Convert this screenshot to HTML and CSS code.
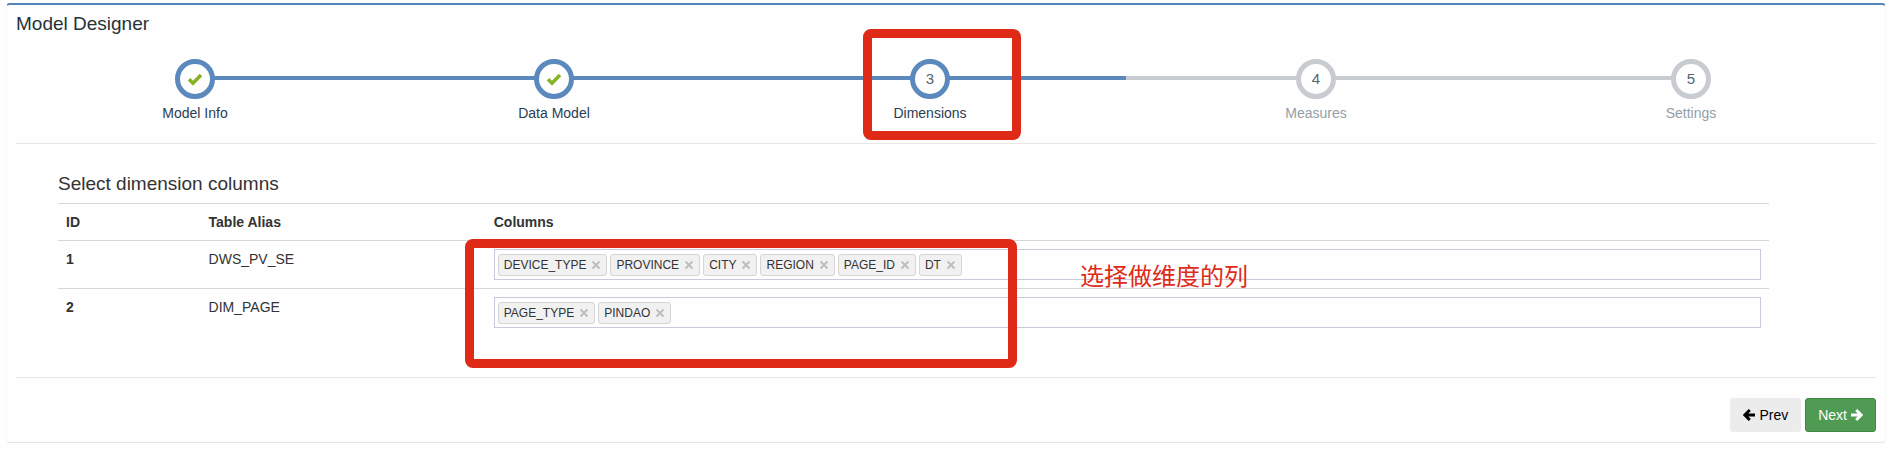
FILE: index.html
```html
<!DOCTYPE html>
<html lang="en">
<head>
<meta charset="utf-8">
<title>Model Designer</title>
<link rel="stylesheet" href="styles.css">
</head>
<body>
<main class="box">
  <h1 class="title">Model Designer</h1>
  <ol class="steps">
    <li class="step done"><span class="circle"><svg class="check" viewBox="0 0 16 14"><path d="M2 7.2 6 11.2 14 3" fill="none" stroke="#87b426" stroke-width="3.6"/></svg></span><span class="step-name">Model Info</span></li>
    <li class="step done"><span class="circle"><svg class="check" viewBox="0 0 16 14"><path d="M2 7.2 6 11.2 14 3" fill="none" stroke="#87b426" stroke-width="3.6"/></svg></span><span class="step-name">Data Model</span></li>
    <li class="step done"><span class="circle">3</span><span class="step-name">Dimensions</span><span class="mark mark-step"></span></li>
    <li class="step"><span class="circle">4</span><span class="step-name">Measures</span></li>
    <li class="step"><span class="circle">5</span><span class="step-name">Settings</span></li>
  </ol>
  <section class="content">
    <h2 class="title">Select dimension columns</h2>
    <div class="table-wrap">
      <table class="dimensions">
        <thead>
          <tr><th class="col-id">ID</th><th class="col-alias">Table Alias</th><th>Columns</th></tr>
        </thead>
        <tbody>
          <tr>
            <th scope="row">1</th>
            <td>DWS_PV_SE</td>
            <td>
              <div class="tags">
                <span class="tag">DEVICE_TYPE<button class="remove" aria-label="Remove DEVICE_TYPE"><svg viewBox="0 0 10 10"><path d="M1.5 1.5 8.5 8.5M8.5 1.5 1.5 8.5"/></svg></button></span>
                <span class="tag">PROVINCE<button class="remove" aria-label="Remove PROVINCE"><svg viewBox="0 0 10 10"><path d="M1.5 1.5 8.5 8.5M8.5 1.5 1.5 8.5"/></svg></button></span>
                <span class="tag">CITY<button class="remove" aria-label="Remove CITY"><svg viewBox="0 0 10 10"><path d="M1.5 1.5 8.5 8.5M8.5 1.5 1.5 8.5"/></svg></button></span>
                <span class="tag">REGION<button class="remove" aria-label="Remove REGION"><svg viewBox="0 0 10 10"><path d="M1.5 1.5 8.5 8.5M8.5 1.5 1.5 8.5"/></svg></button></span>
                <span class="tag">PAGE_ID<button class="remove" aria-label="Remove PAGE_ID"><svg viewBox="0 0 10 10"><path d="M1.5 1.5 8.5 8.5M8.5 1.5 1.5 8.5"/></svg></button></span>
                <span class="tag">DT<button class="remove" aria-label="Remove DT"><svg viewBox="0 0 10 10"><path d="M1.5 1.5 8.5 8.5M8.5 1.5 1.5 8.5"/></svg></button></span>
                <input class="tag-input" type="text" aria-label="DWS_PV_SE columns">
              </div>
            </td>
          </tr>
          <tr>
            <th scope="row">2</th>
            <td>DIM_PAGE</td>
            <td>
              <div class="tags">
                <span class="tag">PAGE_TYPE<button class="remove" aria-label="Remove PAGE_TYPE"><svg viewBox="0 0 10 10"><path d="M1.5 1.5 8.5 8.5M8.5 1.5 1.5 8.5"/></svg></button></span>
                <span class="tag">PINDAO<button class="remove" aria-label="Remove PINDAO"><svg viewBox="0 0 10 10"><path d="M1.5 1.5 8.5 8.5M8.5 1.5 1.5 8.5"/></svg></button></span>
                <input class="tag-input" type="text" aria-label="DIM_PAGE columns">
              </div>
            </td>
          </tr>
        </tbody>
      </table>
      <span class="mark mark-columns"></span>
      <span class="note" lang="zh">选择做维度的列</span>
    </div>
  </section>
  <footer class="actions">
    <button class="btn"><svg class="arrow" viewBox="0 0 12 12"><path d="M6.8 1 1.8 6 6.8 11M2 6H12"/></svg>Prev</button>
    <button class="btn next">Next<svg class="arrow" viewBox="0 0 12 12"><path d="M5.2 1 10.2 6 5.2 11M10 6H0"/></svg></button>
  </footer>
</main>
</body>
</html>
```
FILE: styles.css
```css
* { box-sizing: border-box; }
body {
  margin: 0;
  padding: 3px 8px 20px 6px;
  background: #fefefe;
  color: #333;
  font: 14px/20px "Liberation Sans", Arial, sans-serif;
}
button, input { font: inherit; }
.box {
  padding: 9px 9px 10px;
  border: 1px solid #f8f8f8;
  border-top: 2px solid #5484b8;
  border-bottom-color: #e4e4e4;
  border-radius: 4px;
}
.title { margin: 0; font-size: 19px; font-weight: 400; line-height: 20px; }
h1.title { color: #263238; }
.steps {
  display: grid;
  grid-template-columns: 358fr 360fr 392fr 380fr 370fr;
  margin: 25px 0 0;
  padding: 0 0 20px;
  list-style: none;
  border-bottom: 1px solid #e7e7e7;
}
.step {
  position: relative;
  display: flex;
  flex-direction: column;
  align-items: center;
  gap: 4px;
  color: #949ea7;
}
.step::before {
  content: "";
  position: absolute;
  top: 17px;
  left: 0;
  width: 100%;
  height: 4px;
  background: #c8cbd0;
}
.step:first-child::before { left: 50%; width: 50%; }
.step:last-child::before { width: 50%; }
.step.done::before { background: #5b89bd; }
.circle {
  position: relative;
  display: flex;
  align-items: center;
  justify-content: center;
  width: 40px;
  height: 40px;
  border: 5px solid #c8cbd0;
  border-radius: 50%;
  background: #fefefe;
  color: #546474;
  font-size: 15px;
}
.done .circle { border-color: #5b89bd; }
.done .step-name { color: #2b3d53; }
.check { width: 16px; height: 14px; }
.mark {
  position: absolute;
  border: 9px solid #df2a18;
  border-radius: 8px;
  pointer-events: none;
}
.mark-step { top: -30px; left: 33%; width: 158px; height: 111px; }
.content { padding: 30px 107px 41px 42px; border-bottom: 1px solid #e7e7e7; }
.table-wrap { position: relative; margin-top: 9px; }
.dimensions { width: 100%; table-layout: fixed; border-collapse: separate; border-spacing: 0; }
.col-id { width: 8.333%; }
.col-alias { width: 16.667%; }
.dimensions th, .dimensions td {
  padding: 8px;
  border-top: 1px solid #d5d6d8;
  text-align: left;
  vertical-align: top;
}
.tags {
  display: flex;
  gap: 3px;
  padding: 4px 3px 3px;
  border: 1px solid #cacada;
}
.tag {
  display: flex;
  align-items: center;
  gap: 5px;
  height: 22px;
  padding: 0 5px;
  border: 1px solid #d5d5d5;
  border-radius: 3px;
  background: #f1f1f1;
  font-size: 12px;
}
.remove { display: flex; padding: 0; border: 0; background: none; }
.remove svg { width: 10px; height: 10px; fill: none; stroke: #bfbfbf; stroke-width: 2; }
.tag-input { flex: 1; min-width: 0; height: 22px; padding: 0; border: 0; background: none; }
.mark-columns { top: 36px; left: 407px; width: 552px; height: 129px; }
.note {
  position: absolute;
  top: 57px;
  left: 1022px;
  color: #df2a18;
  font: 400 24px/30px "Noto Sans CJK SC", sans-serif;
}
.actions { display: flex; justify-content: flex-end; gap: 4px; padding-top: 20px; }
.btn {
  display: flex;
  align-items: center;
  gap: 4px;
  padding: 6px 12px;
  border: 1px solid #ececec;
  border-radius: 3px;
  background: #ececec;
  color: #000;
}
.next { border-color: #3f8745; background: #4f9b54; color: #fff; }
.arrow { width: 12px; height: 12px; fill: none; stroke: currentColor; stroke-width: 3; }
```
